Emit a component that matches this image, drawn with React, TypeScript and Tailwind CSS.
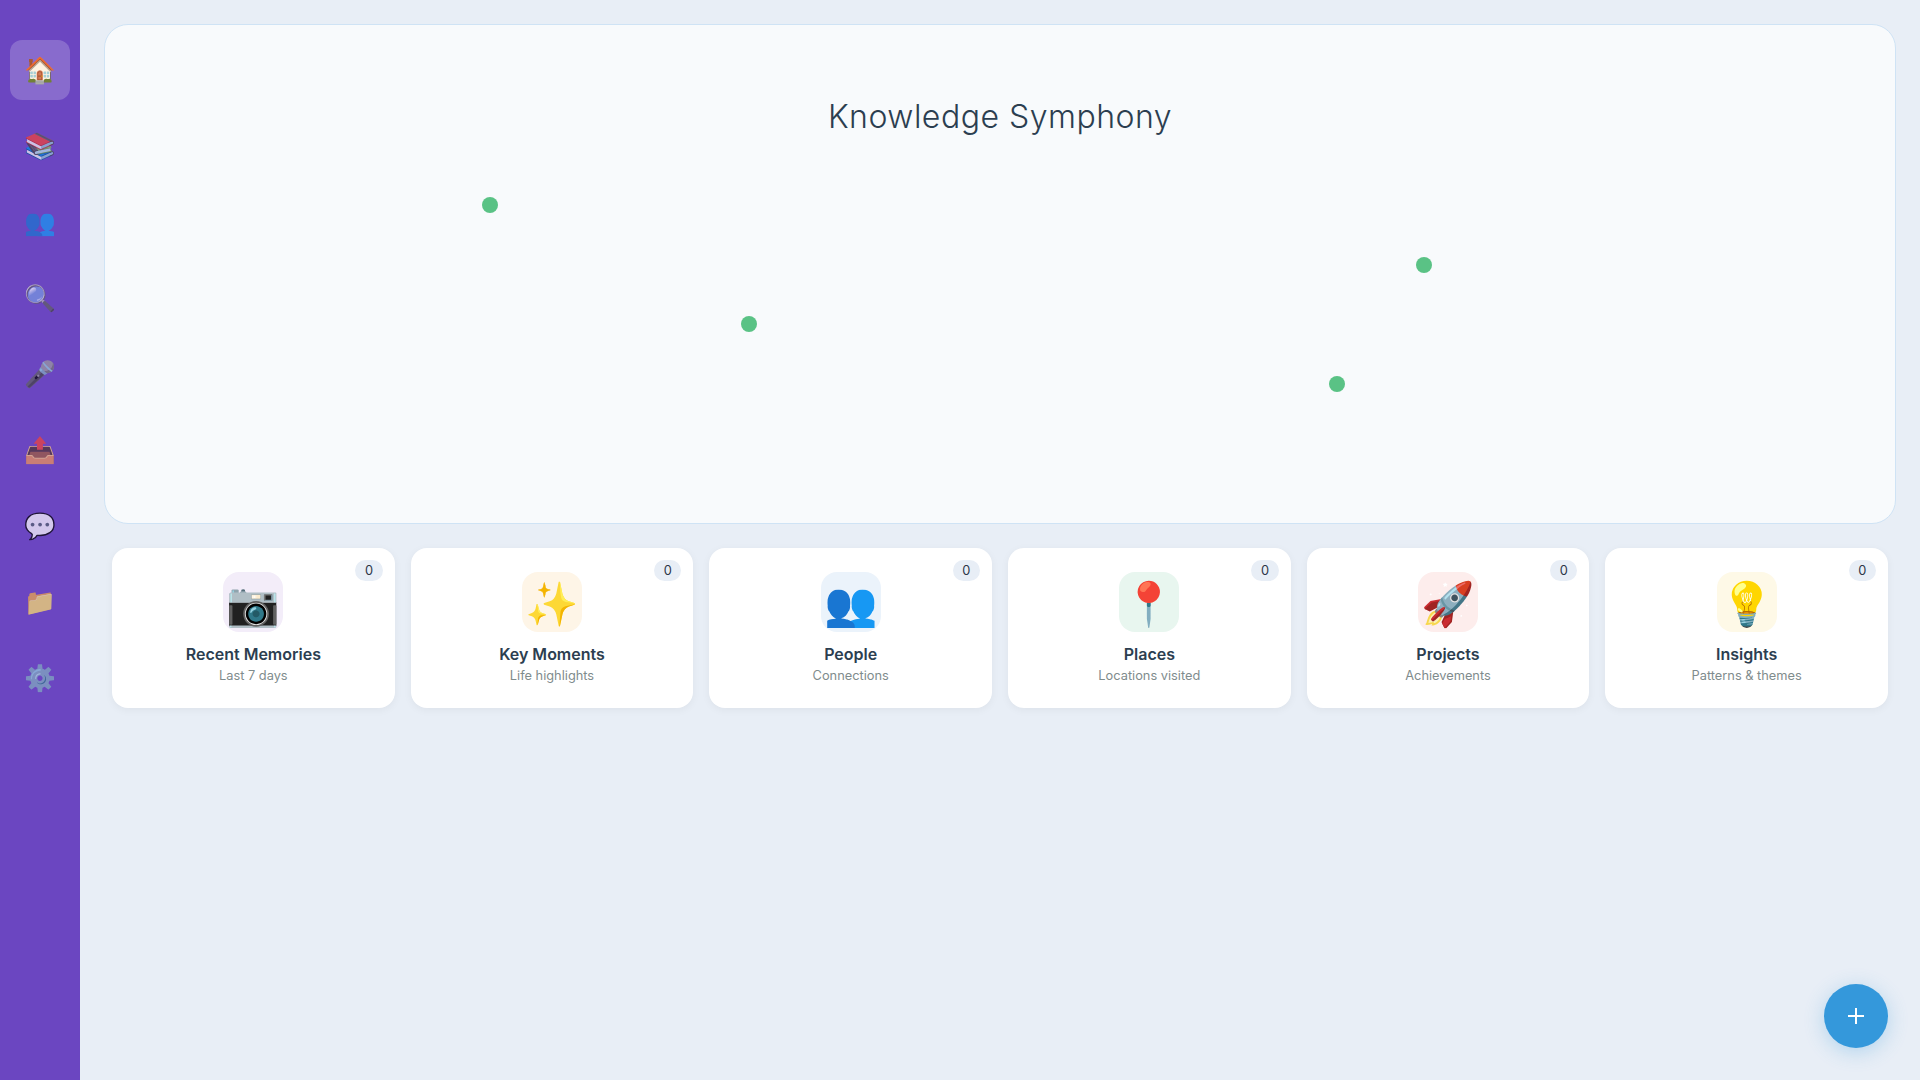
import React from 'react';

const navItems = ['🏠', '📚', '👥', '🔍', '🎤', '📤', '💬', '📁', '⚙️'];

const cards = [
    { emoji: '📷', title: 'Recent Memories', sub: 'Last 7 days', tint: 'bg-[#f3edf9]' },
    { emoji: '✨', title: 'Key Moments', sub: 'Life highlights', tint: 'bg-[#fef5e7]' },
    { emoji: '👥', title: 'People', sub: 'Connections', tint: 'bg-[#ebf3fb]' },
    { emoji: '📍', title: 'Places', sub: 'Locations visited', tint: 'bg-[#e8f6ef]' },
    { emoji: '🚀', title: 'Projects', sub: 'Achievements', tint: 'bg-[#fdedec]' },
    { emoji: '💡', title: 'Insights', sub: 'Patterns & themes', tint: 'bg-[#fef9e7]' },
];

const dots = [
    'left-[377px] top-[172px]',
    'left-[636px] top-[291px]',
    'left-[1311px] top-[232px]',
    'left-[1224px] top-[351px]',
];

const Sidebar = () => (
    <nav className="w-20 shrink-0 bg-[#6b46c1] flex flex-col items-center gap-4 py-10">
        {navItems.map((icon, i) => (
            <div
                key={icon}
                className={`w-[60px] h-[60px] rounded-xl flex items-center justify-center text-[25.6px] pt-px ${i === 0 ? 'bg-white/20' : ''}`}
            >
                <span className={i === 0 ? '' : 'opacity-70'}>{icon}</span>
            </div>
        ))}
    </nav>
);

const Card = ({ emoji, title, sub, tint }: (typeof cards)[number]) => (
    <div className="relative h-40 bg-white rounded-2xl pt-6 flex flex-col items-center shadow-[0_2px_8px_rgba(0,0,0,0.05)]">
        <span className="absolute top-3 right-3 h-[21px] px-[9.6px] rounded-full bg-[#e8eef6] text-[12.8px] leading-[21px] text-[#2d3748]">0</span>
        <div className={`w-[60px] h-[60px] rounded-2xl flex items-center justify-center text-[43px] leading-none pt-[2px] ${tint}`}>{emoji}</div>
        <div className="mt-[10px] text-base leading-[24px] font-semibold text-[#2c3e50]">{title}</div>
        <div className="text-[12.8px] leading-[20px] text-[#7f8c8d]">{sub}</div>
    </div>
);

export default function App() {
    return (
        <div className="flex w-full h-screen overflow-hidden bg-[#e8eef6] font-['Inter','Noto_Color_Emoji',sans-serif]">
            <Sidebar />
            <main className="flex-1 p-6 flex flex-col gap-6">
                <section className="relative h-[500px] rounded-3xl bg-[#f8fafc] border border-[#cfe3f5] pt-[68px] text-center">
                    <h1 className="text-[32px] leading-[48px] font-light tracking-[0.5px] text-[#2c3e50]">Knowledge Symphony</h1>
                    {dots.map((pos) => (
                        <span key={pos} className={`absolute w-4 h-4 rounded-full bg-[#48bb78] opacity-90 ${pos}`} />
                    ))}
                </section>
                <section className="grid grid-cols-6 gap-4 px-2">
                    {cards.map((card) => (
                        <Card key={card.title} {...card} />
                    ))}
                </section>
            </main>
            <button className="absolute right-8 bottom-8 w-16 h-16 rounded-full bg-[#3498db] text-white flex items-center justify-center shadow-[0_4px_20px_rgba(52,152,219,0.3)]">
                <svg width="20" height="20" viewBox="0 0 20 20" fill="none" stroke="currentColor" strokeWidth="2"><path d="M10 2v16M2 10h16" /></svg>
            </button>
        </div>
    );
}
